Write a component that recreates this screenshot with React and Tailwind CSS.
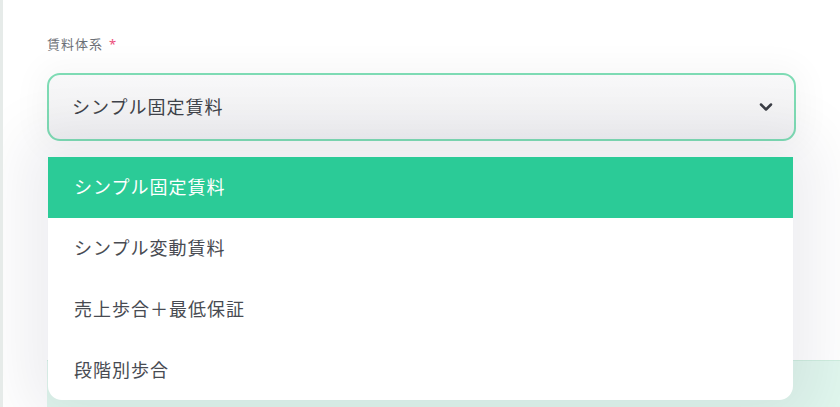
import { ChevronDown } from 'lucide-react';

const OPTIONS = [
  'シンプル固定賃料',
  'シンプル変動賃料',
  '売上歩合＋最低保証',
  '段階別歩合',
];

export default function App() {
  const selected = OPTIONS[0];

  return (
    <div
      className="relative w-[840px] h-[407px] overflow-hidden bg-white border-l-[3px] border-[#e6ebe9]"
      style={{ fontFamily: '"Noto Sans", "Noto Sans CJK JP", sans-serif' }}
    >
      <div className="pl-[44px] pr-[44px] pt-[34px]">
        {/* label */}
        <div className="flex items-center gap-[6px] text-[13px] tracking-[1px] text-[#6b6f76] leading-5">
          <span>賃料体系</span>
          <span className="text-[#ec4d7a]">*</span>
        </div>

        {/* select */}
        <div className="mt-[19px] h-[68px] flex items-center justify-between rounded-[13px] border-2 border-[#7edbb4] bg-gradient-to-b from-[#f8f8f9] to-[#f0f0f2] pl-[23px] pr-[18px] shadow-[0_0_30px_10px_rgba(20,20,40,0.03)]">
          <span className="text-[18px] tracking-[1px] text-[#3f434a]">{selected}</span>
          <ChevronDown className="w-5 h-5 text-[#3a3d45]" strokeWidth={3} />
        </div>

        {/* card underneath */}
        <div className="mt-[219px] h-[60px] -mr-[44px] bg-[#e1f7ee] border-t border-[#cfeedf]" />
      </div>

      {/* dropdown menu */}
      <div className="absolute left-[45px] top-[157px] w-[745px] h-[243px] bg-white rounded-b-[14px] shadow-[0_0_60px_24px_rgba(20,20,50,0.07)] overflow-hidden">
        {OPTIONS.map((o, i) => (
          <div
            key={o}
            className={`h-[61px] flex items-center pl-[26px] text-[18px] tracking-[1px] ${
              i === 0 ? 'bg-[#2bcb97] text-white' : 'text-[#484b52]'
            }`}
          >
            {o}
          </div>
        ))}
      </div>
    </div>
  );
}
